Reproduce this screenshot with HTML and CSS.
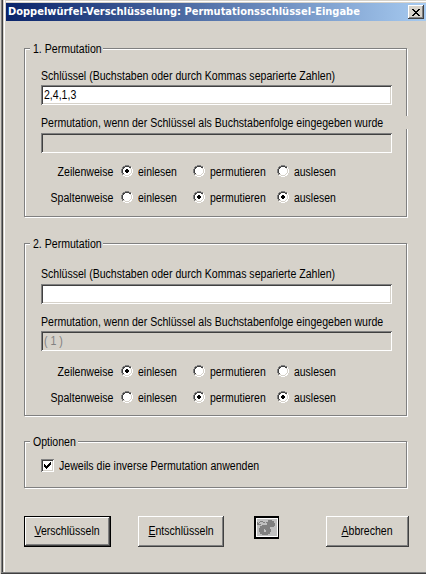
FILE: index.html
```html
<!DOCTYPE html>
<html lang="de">
<head>
<meta charset="utf-8">
<title>Doppelwürfel-Verschlüsselung</title>
<link rel="stylesheet" href="styles.css">
</head>
<body>
<svg class="defs" width="0" height="0">
  <defs>
    <g id="ring" shape-rendering="crispEdges">
      <path fill="#fff" d="M4 2h4v1h2v1h1v5h-1v1h-2v1H4v-1H2V8H1V4h1V3h2z"/>
      <path fill="#808080" d="M4 0h4v1H4zM2 1h2v1H2zM8 1h2v1H8zM1 2h1v2H1zM0 4h1v4H0zM1 8h1v2H1z"/>
      <path fill="#404040" d="M4 1h4v1H4zM2 2h2v1H2zM8 2h2v1H8zM2 3h1v1H2zM1 4h1v4H1zM2 8h1v1H2z"/>
      <path fill="#d6d2ca" d="M9 3h1v1H9zM10 4h1v4h-1zM9 8h1v1H9zM8 9h1v1H8zM4 10h4v1H4zM2 9h2v1H2z"/>
      <path fill="#fff" d="M10 2h1v2h-1zM11 4h1v4h-1zM10 8h1v2h-1zM8 10h2v1H8zM4 11h4v1H4zM2 10h2v1H2z"/>
    </g>
    <path id="dot" shape-rendering="crispEdges" d="M5 4h2v1h1v2H7v1H5V7H4V5h1z"/>
  </defs>
</svg>
<main class="dialog">
  <header class="titlebar">
    <h1 class="title">Doppelwürfel-Verschlüsselung: Permutationsschlüssel-Eingabe</h1>
    <button class="close" aria-label="Schließen"><svg width="8" height="7" shape-rendering="crispEdges"><path d="M0 0h2v1h1v1h2V1h1V0h2v1H7v1H6v1H5v1h1v1h1v1h1v1H6V6H5V5H3v1H2v1H0V6h1V5h1V4h1V3H2V2H1V1H0z"/></svg></button>
  </header>

  <section class="group first">
    <h2 class="legend perm"><span class="narrow">1. Permutation</span></h2>
    <p class="label key"><span class="narrow">Schlüssel (Buchstaben oder durch Kommas separierte Zahlen)</span></p>
    <div class="field"><span class="narrow">2,4,1,3</span></div>
    <p class="label result cover"><span class="narrow">Permutation, wenn der Schlüssel als Buchstabenfolge eingegeben wurde</span></p>
    <div class="field off"></div>
    <div class="choices">
      <span class="narrow row">Zeilenweise</span>
      <svg class="radio"><use href="#ring"/><use href="#dot"/></svg><span class="narrow choice">einlesen</span>
      <svg class="radio"><use href="#ring"/></svg><span class="narrow choice">permutieren</span>
      <svg class="radio"><use href="#ring"/></svg><span class="narrow choice">auslesen</span>
      <span class="narrow row">Spaltenweise</span>
      <svg class="radio"><use href="#ring"/></svg><span class="narrow choice">einlesen</span>
      <svg class="radio"><use href="#ring"/><use href="#dot"/></svg><span class="narrow choice">permutieren</span>
      <svg class="radio"><use href="#ring"/><use href="#dot"/></svg><span class="narrow choice">auslesen</span>
    </div>
  </section>

  <section class="group second">
    <h2 class="legend perm"><span class="narrow">2. Permutation</span></h2>
    <p class="label key"><span class="narrow">Schlüssel (Buchstaben oder durch Kommas separierte Zahlen)</span></p>
    <div class="field"></div>
    <p class="label result"><span class="narrow">Permutation, wenn der Schlüssel als Buchstabenfolge eingegeben wurde</span></p>
    <div class="field off"><span class="narrow">( 1 )</span></div>
    <div class="choices">
      <span class="narrow row">Zeilenweise</span>
      <svg class="radio"><use href="#ring"/><use href="#dot"/></svg><span class="narrow choice">einlesen</span>
      <svg class="radio"><use href="#ring"/></svg><span class="narrow choice">permutieren</span>
      <svg class="radio"><use href="#ring"/></svg><span class="narrow choice">auslesen</span>
      <span class="narrow row">Spaltenweise</span>
      <svg class="radio"><use href="#ring"/></svg><span class="narrow choice">einlesen</span>
      <svg class="radio"><use href="#ring"/><use href="#dot"/></svg><span class="narrow choice">permutieren</span>
      <svg class="radio"><use href="#ring"/><use href="#dot"/></svg><span class="narrow choice">auslesen</span>
    </div>
  </section>

  <section class="group options">
    <h2 class="legend opt"><span class="narrow">Optionen</span></h2>
    <div class="checkrow">
      <span class="checkbox"><svg width="7" height="7" shape-rendering="crispEdges"><path d="M0 2h1v1h1v1h1V3h1V2h1V1h1V0h1v3H6v1H5v1H4v1H3v1H2V6H1V5H0z"/></svg></span>
      <span class="narrow inverse">Jeweils die inverse Permutation anwenden</span>
    </div>
  </section>

  <footer class="actions">
    <button class="btn default"><span class="narrow"><u>V</u>erschlüsseln</span></button>
    <button class="btn ent"><span class="narrow"><u>E</u>ntschlüsseln</span></button>
    <svg class="key-icon" width="25" height="23" viewBox="0 0 25 23" shape-rendering="crispEdges">
      <path d="M0 0h25v23H0z"/>
      <path fill="#fff" d="M2 2h22v19H2z"/>
      <path fill="#c0c0c0" d="M3 3h20v17H3z"/>
      <path fill="#808080" d="M14 4h4v1h2v2h1v3h-1v1h-4v2h1v3h-1v2h-2v1H8v-1H6v-2H5v-4h1v-2h2V9h5V7h-1V6h2zM3 6h1v1h1v1h2v1H3zM5 6h1V5h3v1h2v1H9V6H6v1H5z"/>
      <path fill="#c0c0c0" d="M10 13h1v1h1v2h-2z"/>
    </svg>
    <button class="btn abb"><span class="narrow"><u>A</u>bbrechen</span></button>
  </footer>
</main>
</body>
</html>
```

FILE: styles.css
```css
* { box-sizing: border-box; margin: 0; padding: 0; }
body {
  width: 426px;
  height: 574px;
  overflow: hidden;
  background: #d6d2ca;
  color: #000;
  font: 12px/14px "Liberation Sans", sans-serif;
  white-space: nowrap;
}
.defs { display: block; }
.narrow { display: inline-block; height: 14px; transform: scaleX(0.88); transform-origin: 0 0; }
.dialog {
  display: flex;
  flex-direction: column;
  width: 425px;
  height: 574px;
  margin-left: 1px;
  padding-left: 5px;
  border-bottom: 1px solid #404040;
  background: linear-gradient(90deg, #808080 1px, #404040 1px 2px, #d6d2ca 2px 3px, #fff 3px 4px, #d6d2ca 4px);
  box-shadow: inset 0 -1px #808080;
}
.titlebar {
  display: flex;
  flex: none;
  align-items: center;
  justify-content: space-between;
  height: 18px;
  margin-top: 3px;
  padding: 0 2px;
  background: linear-gradient(90deg, #0a246a, #a6caf0);
  box-shadow: 0 -1px #d6d2ca, 0 -2px #fff;
}
.title { color: #fff; font: bold 11px/18px "DejaVu Sans Condensed", "DejaVu Sans", sans-serif; }
.close {
  display: flex;
  align-items: center;
  justify-content: center;
  width: 16px;
  height: 14px;
  border: 0;
  background: #d6d2ca;
  box-shadow: inset -1px -1px #404040, inset 1px 1px #fff, inset -2px -2px #808080;
}
.group {
  display: flex;
  flex-direction: column;
  flex: none;
  width: 383px;
  margin-left: 18px;
  padding-left: 16px;
  border: 1px solid #808080;
  box-shadow: inset 1px 1px #fff, 1px 1px #fff;
}
.first { height: 169px; margin-top: 27px; }
.second { height: 173px; margin-top: 26px; }
.options { height: 47px; margin-top: 25px; }
.legend {
  height: 14px;
  margin: -7px 0 0 -11px;
  padding-left: 3px;
  background: #d6d2ca;
  font-size: 12px;
  font-weight: normal;
}
.perm { width: 73px; }
.opt { width: 48px; }
.label { height: 14px; }
.key { margin-top: 13px; }
.second .key { margin-top: 16px; }
.result { margin-top: 11px; }
.cover { width: 367px; height: 13px; background: #d6d2ca; }
.field {
  flex: none;
  width: 351px;
  height: 20px;
  margin-top: 2px;
  padding: 3px;
  background: #fff;
  box-shadow: inset 1px 1px #808080, inset -1px -1px #fff, inset 2px 2px #404040, inset -2px -2px #d6d2ca;
}
.second .key + .field { margin-top: 3px; }
.cover + .field { margin-top: 4px; }
.off { background: #d6d2ca; color: #808080; }
.choices {
  display: grid;
  grid-template-columns: 80px 72px 12px 72px;
  grid-template-columns: 80px 12px 60px 12px 72px 12px 60px;
  grid-template-rows: 14px 14px;
  row-gap: 12px;
  margin-top: 12px;
  align-items: center;
}
.second .choices { margin-top: 14px; }
.radio { display: block; width: 12px; height: 12px; margin-top: -2px; }
.row { justify-self: end; margin-right: 8px; transform-origin: 100% 0; }
.choice { margin-left: 5px; transform: scaleX(0.87); }
.checkrow { display: flex; margin-top: 10px; }
.checkbox {
  display: flex;
  align-items: center;
  justify-content: center;
  width: 13px;
  height: 13px;
  background: #fff;
  box-shadow: inset 1px 1px #808080, inset -1px -1px #fff, inset 2px 2px #404040, inset -2px -2px #d6d2ca;
}
.inverse { margin-left: 5px; }
.actions { display: flex; flex: none; align-items: flex-start; margin: 28px 0 0 18px; }
.btn {
  width: 86px;
  height: 31px;
  padding-bottom: 1px;
  border: 0;
  background: #d6d2ca;
  font: 12px/14px "Liberation Sans", sans-serif;
  box-shadow: inset -1px -1px #404040, inset 1px 1px #fff, inset -2px -2px #808080;
}
.btn .narrow { transform-origin: 50% 0; }
.default { width: 87px; border: 1px solid #000; }
.ent { margin-left: 27px; }
.key-icon { margin-left: 30px; }
.abb { width: 83px; margin-left: 47px; }
u { text-underline-offset: 1px; text-decoration-skip-ink: none; }
```
